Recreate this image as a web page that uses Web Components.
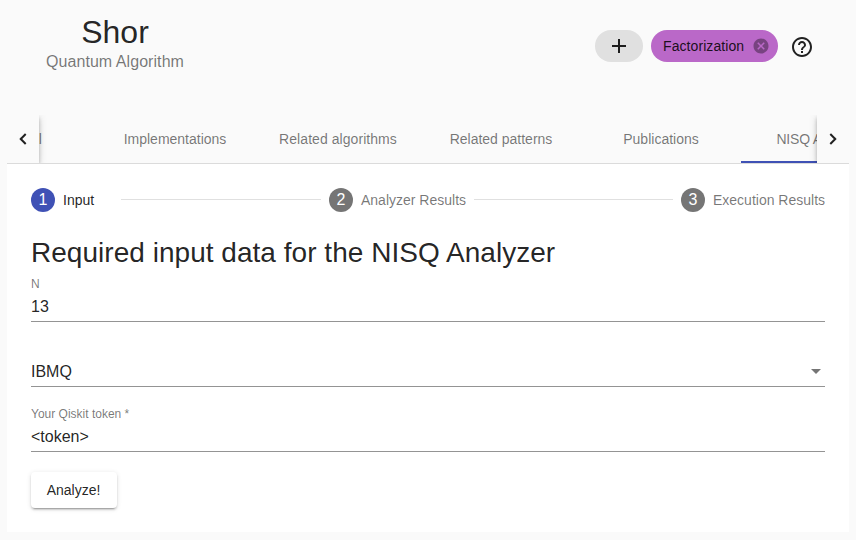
<!DOCTYPE html>
<html lang="en">
<head>
<meta charset="utf-8">
<title>Shor</title>
<style>
html, body { margin: 0; height: 100%; }
body { background: #fafafa; font-family: "Liberation Sans", Arial, sans-serif; color: rgba(0,0,0,.87); overflow: hidden; }
</style>
</head>
<body>
<algorithm-page></algorithm-page>
<script>
function define(name, html) {
  const template = document.createElement('template');
  template.innerHTML = html;
  customElements.define(name, class extends HTMLElement {
    constructor() {
      super();
      this.attachShadow({ mode: 'open' }).appendChild(template.content.cloneNode(true));
    }
  });
}

define('page-title', `
<style>
:host { display: block; width: 138px; text-align: center; white-space: nowrap; }
h1 { margin: 0; font-size: 32px; line-height: 36px; font-weight: 400; }
p { margin: 1px 0 0; font-size: 16px; line-height: 22px; letter-spacing: .06px; color: rgba(0,0,0,.54); }
</style>
<h1><slot></slot></h1><p><slot name="subtitle"></slot></p>`);

define('tag-chip', `
<style>
:host { display: flex; align-items: center; box-sizing: border-box; width: 127px; height: 32px; border-radius: 16px; padding: 0 8px 0 12px; font-size: 14px; letter-spacing: .08px; background: #ba68c8; white-space: nowrap; }
svg { flex: none; width: 18px; height: 18px; margin-left: auto; fill: currentColor; opacity: .4; }
</style>
<slot></slot>
<svg viewBox="0 0 24 24"><path d="M12 2C6.47 2 2 6.47 2 12s4.47 10 10 10 10-4.47 10-10S17.53 2 12 2zm5 13.59L15.59 17 12 13.41 8.41 17 7 15.59 10.59 12 7 8.41 8.41 7 12 10.59 15.59 7 17 8.41 13.41 12 17 15.59z"/></svg>`);

define('add-chip', `
<style>
:host { display: flex; align-items: center; justify-content: center; width: 48px; height: 32px; border-radius: 16px; background: #e0e0e0; }
svg { width: 24px; height: 24px; fill: currentColor; }
</style>
<svg viewBox="0 0 24 24"><path d="M19 13h-6v6h-2v-6H5v-2h6V5h2v6h6v2z"/></svg>`);

define('help-icon', `
<style>
:host { display: block; width: 24px; height: 24px; margin: 2px 0 0 4px; }
svg { display: block; width: 24px; height: 24px; fill: currentColor; }
</style>
<svg viewBox="0 0 24 24"><path d="M11 18h2v-2h-2v2zm1-16C6.48 2 2 6.48 2 12s4.48 10 10 10 10-4.48 10-10S17.52 2 12 2zm0 18c-4.41 0-8-3.59-8-8s3.59-8 8-8 8 3.59 8 8-3.59 8-8 8zm0-14c-2.21 0-4 1.79-4 4h2c0-1.1.9-2 2-2s2 .9 2 2c0 2-3 1.75-3 5h2c0-2.25 3-2.5 3-5 0-2.21-1.79-4-4-4z"/></svg>`);

define('page-header', `
<style>
:host { display: flex; justify-content: space-between; align-items: flex-start; box-sizing: border-box; height: 115px; padding: 14px 42px 0 46px; }
div { display: flex; align-items: center; gap: 8px; margin-top: 16px; }
</style>
<slot name="title"></slot><div><slot></slot></div>`);

define('tab-label', `
<style>
:host { display: flex; flex: none; align-items: center; justify-content: center; box-sizing: border-box; height: 48px; width: 160px; font-size: 14px; color: rgba(0,0,0,.54); white-space: nowrap; }
:host([wide]) { width: 166px; letter-spacing: .06px; }
:host([first]) { padding-left: 4px; }
:host([active]) { border-bottom: 2px solid #3f51b5; padding-top: 2px; letter-spacing: -.2px; }
</style>
<slot></slot>`);

define('tab-pager', `
<style>
:host { display: flex; flex: none; align-items: center; justify-content: center; width: 32px; height: 48px; z-index: 2; background: #fafafa; box-shadow: 0 2px 4px -1px rgba(0,0,0,.2), 0 4px 5px rgba(0,0,0,.14), 0 1px 10px rgba(0,0,0,.12); }
i { box-sizing: border-box; width: 8px; height: 8px; border: solid rgba(0,0,0,.87); border-width: 2px 2px 0 0; transform: rotate(45deg); margin-right: 4px; }
:host([back]) i { transform: rotate(-135deg); margin: 0 0 0 4px; }
</style>
<i></i>`);

define('tab-bar', `
<style>
:host { display: flex; height: 48px; overflow: hidden; border-bottom: 1px solid rgba(0,0,0,.12); }
.view { flex: 1; min-width: 0; overflow: hidden; }
.list { display: flex; margin-left: -104px; }
tab-pager[back] { z-index: 1; }
</style>
<tab-pager back></tab-pager>
<div class="view"><div class="list"><slot></slot></div></div>
<tab-pager></tab-pager>`);

define('step-item', `
<style>
:host { display: flex; align-items: center; gap: 8px; font-size: 14px; color: rgba(0,0,0,.54); white-space: nowrap; }
.num { display: flex; align-items: center; justify-content: center; width: 24px; height: 24px; border-radius: 50%; background: #757575; color: #fff; font-size: 16px; }
.text { min-width: 50px; }
:host([active]) { color: rgba(0,0,0,.87); }
:host([active]) .num { background: #3f51b5; }
</style>
<span class="num"><slot name="num"></slot></span><span class="text"><slot></slot></span>`);

define('step-row', `
<style>
:host { display: grid; grid-template-columns: 82px 200px 137px 199px 144px; align-items: center; gap: 8px; height: 24px; }
::slotted(hr) { width: 100%; margin: 0; border: 0; border-top: 1px solid rgba(0,0,0,.12); transform: translateY(-1px); }
</style>
<slot></slot>`);

define('form-field', `
<style>
:host { display: block; box-sizing: border-box; height: 65px; font-size: 16px; }
.label { height: 14px; font-size: 12px; line-height: 14px; color: rgba(0,0,0,.54); }
.value { display: flex; align-items: center; justify-content: space-between; box-sizing: border-box; height: 31px; padding-top: 2px; border-bottom: 1px solid rgba(0,0,0,.42); }
i { display: none; border: 5px solid transparent; border-top-color: rgba(0,0,0,.54); border-bottom: 0; margin: -2px 4px 0 0; }
:host([select]) i { display: block; }
</style>
<div class="label"><slot name="label"></slot></div>
<div class="value"><slot></slot><i></i></div>`);

define('raised-button', `
<style>
:host { display: flex; align-items: center; justify-content: center; box-sizing: border-box; width: 86px; height: 36px; padding-right: 1px; border-radius: 4px; background: #fff; font-size: 14px; box-shadow: 0 3px 1px -2px rgba(0,0,0,.2), 0 2px 2px rgba(0,0,0,.14), 0 1px 5px rgba(0,0,0,.12); }
</style>
<slot></slot>`);

define('content-panel', `
<style>
:host { display: block; box-sizing: border-box; height: 368px; padding: 24px; background: #fff; }
</style>
<slot></slot>`);

define('algorithm-page', `
<style>
:host { display: block; }
main { padding: 0 7px; }
h2 { margin: 23px 0 0; height: 42px; line-height: 36px; font-size: 28px; font-weight: 400; letter-spacing: .03px; white-space: nowrap; }
</style>
<page-header>
  <page-title slot="title"><span>Shor</span><span slot="subtitle">Quantum Algorithm</span></page-title>
  <add-chip></add-chip>
  <tag-chip><span>Factorization</span></tag-chip>
  <help-icon></help-icon>
</page-header>
<main>
  <tab-bar>
    <tab-label first><span>General</span></tab-label>
    <tab-label><span>Implementations</span></tab-label>
    <tab-label wide><span>Related algorithms</span></tab-label>
    <tab-label><span>Related patterns</span></tab-label>
    <tab-label><span>Publications</span></tab-label>
    <tab-label active><span>NISQ Analyzer</span></tab-label>
  </tab-bar>
  <content-panel>
    <step-row>
      <step-item active><span slot="num">1</span><span>Input</span></step-item>
      <hr>
      <step-item><span slot="num">2</span><span>Analyzer Results</span></step-item>
      <hr>
      <step-item><span slot="num">3</span><span>Execution Results</span></step-item>
    </step-row>
    <h2>Required input data for the NISQ Analyzer</h2>
    <form-field><span slot="label">N</span><span>13</span></form-field>
    <form-field select><span>IBMQ</span></form-field>
    <form-field><span slot="label">Your Qiskit token *</span><span>&lt;token&gt;</span></form-field>
    <raised-button><span>Analyze!</span></raised-button>
  </content-panel>
</main>`);
</script>
</body>
</html>
